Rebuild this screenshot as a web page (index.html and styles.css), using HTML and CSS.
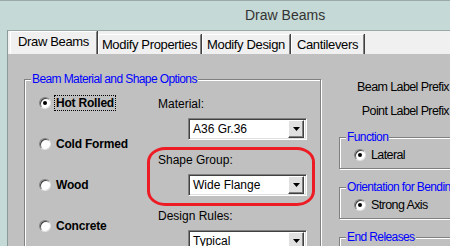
FILE: index.html
```html
<!doctype html>
<html>
    <head>
        <meta charset="utf-8">
        <title>Draw Beams</title>
        <link rel="stylesheet" href="styles.css">
    </head>
    <body>
        <div class="titlebar"><span class="title">Draw Beams</span></div>
        <div class="window">
            <div class="tabs">
                <div class="tab active tab-draw">Draw Beams</div>
                <div class="tab tab-props">Modify Properties</div>
                <div class="tab tab-design">Modify Design</div>
                <div class="tab tab-cant">Cantilevers</div>
            </div>
            <div class="panel">
                <fieldset class="group main">
                    <legend>Beam Material and Shape Options</legend>
                    <div class="main-grid">
                        <div class="types">
                            <div class="opt bold"><span class="radio checked"></span><span class="focus">Hot Rolled</span></div>
                            <div class="opt bold"><span class="radio"></span><span>Cold Formed</span></div>
                            <div class="opt bold"><span class="radio"></span><span>Wood</span></div>
                            <div class="opt bold"><span class="radio"></span><span>Concrete</span></div>
                        </div>
                        <div class="fields">
                            <div class="field-label">Material:</div>
                            <div class="combo"><span class="combo-text">A36 Gr.36</span><span class="combo-btn"><svg width="7" height="4" viewBox="0 0 7 4"><polygon points="0,0 7,0 3.5,4" fill="#000"/></svg></span></div>
                            <div class="field-label">Shape Group:</div>
                            <div class="combo"><span class="combo-text">Wide Flange</span><span class="combo-btn"><svg width="7" height="4" viewBox="0 0 7 4"><polygon points="0,0 7,0 3.5,4" fill="#000"/></svg></span></div>
                            <div class="field-label">Design Rules:</div>
                            <div class="combo"><span class="combo-text">Typical</span><span class="combo-btn"><svg width="7" height="4" viewBox="0 0 7 4"><polygon points="0,0 7,0 3.5,4" fill="#000"/></svg></span></div>
                        </div>
                    </div>
                </fieldset>
                <div class="side">
                    <div class="prefix">Beam Label Prefix</div>
                    <div class="prefix">Point Label Prefix</div>
                    <fieldset class="group side-group">
                        <legend>Function</legend>
                        <div class="opt narrow"><span class="radio checked"></span><span>Lateral</span></div>
                    </fieldset>
                    <fieldset class="group side-group">
                        <legend>Orientation for Bending</legend>
                        <div class="opt narrow"><span class="radio checked"></span><span>Strong Axis</span></div>
                    </fieldset>
                    <fieldset class="group side-group">
                        <legend>End Releases</legend>
                        <div class="opt narrow"><span class="radio"></span><span>Pinned</span></div>
                    </fieldset>
                </div>
            </div>
        </div>
        <div class="highlight"></div>
    </body>
</html>
```

FILE: styles.css
```css
html, body {
    margin: 0;
    height: 246px;
    overflow: hidden;
}
body {
    position: relative;
    background-color: #c5d9d6;
    border-top: 1px solid #9aaaa8;
    box-sizing: border-box;
    font-family: "Liberation Sans", Arial, sans-serif;
    font-size: 12px;
    color: #000;
}
.titlebar {
    height: 29px;
    line-height: 29px;
    padding-left: 245px;
    font-size: 14px;
    color: #333;
}
.window {
    margin-left: 7px;
    width: 600px;
    height: 216px;
    border-left: 1px solid #8a9a98;
    border-top: 1px solid #9aa8a6;
    background-color: #c0c0c0;
}
.tabs {
    display: flex;
    align-items: flex-end;
    height: 23px;
    padding-left: 2px;
    background-color: #f0f0f0;
}
.tab {
    height: 20px;
    line-height: 20px;
    box-sizing: border-box;
    font-size: 13px;
    letter-spacing: -0.35px;
    border-left: 1px solid #fff;
    border-top: 1px solid #fff;
    border-right: 1px solid #808080;
    box-shadow: 1px 0 0 #404040;
    background-color: #f0f0f0;
    text-align: center;
    white-space: nowrap;
}
.tab.active {
    height: 23px;
    line-height: 20px;
    position: relative;
    z-index: 1;
}
.tab + .tab {
    margin-left: 1px;
}
.tab-draw { width: 87px; }
.tab-props { width: 103px; }
.tab-design { width: 88px; }
.tab-cant { width: 73px; }
.panel {
    display: flex;
    gap: 18px;
    padding-left: 16px;
}
.group {
    margin: 0;
    min-width: 0;
    border: 1px solid #808080;
    box-shadow: inset 1px 1px 0 #fff, 1px 1px 0 #fff;
}
.group legend {
    margin-left: -8px;
    padding: 0 1px;
    line-height: 14px;
    font-size: 12px;
    letter-spacing: -0.6px;
    color: #0000ff;
    background-color: #c0c0c0;
    white-space: nowrap;
}
.main {
    width: 297px;
    height: 200px;
    margin-top: 18px;
    padding: 9px 0 0 14px;
    box-sizing: border-box;
}
.main-grid {
    display: grid;
    grid-template-columns: 119px 119px;
}
.types {
    display: flex;
    flex-direction: column;
    gap: 25px;
}
.opt {
    display: flex;
    align-items: center;
    gap: 5px;
    height: 16px;
    white-space: nowrap;
}
.opt.bold {
    font-weight: bold;
    letter-spacing: -0.2px;
}
.opt.narrow {
    font-size: 12.5px;
    letter-spacing: -0.6px;
}
.focus {
    outline: 1px dotted #000;
    padding: 0 1px;
    margin-left: -1px;
    line-height: 14px;
}
.radio {
    position: relative;
    flex: none;
    width: 12px;
    height: 12px;
    box-sizing: border-box;
    border-radius: 50%;
    background-color: #fff;
    border: 1px solid;
    border-color: #808080 #e0e0e0 #e0e0e0 #808080;
    box-shadow: inset 1px 1px 0 #404040;
}
.radio.checked::after {
    content: "";
    position: absolute;
    left: 3px;
    top: 3px;
    width: 4px;
    height: 4px;
    border-radius: 50%;
    background-color: #000;
}
.fields {
    display: flex;
    flex-direction: column;
    padding-top: 1px;
}
.field-label {
    line-height: 16px;
    height: 16px;
}
.combo {
    display: flex;
    width: 119px;
    height: 22px;
    margin: 6px 0 12px 30px;
    box-sizing: border-box;
    background-color: #fff;
    border: 1px solid;
    border-color: #808080 #fff #fff #808080;
    box-shadow: inset 1px 1px 0 #404040, inset -1px -1px 0 #dfdfdf;
    padding: 1px 2px 1px 1px;
}
.combo-text {
    flex: 1;
    line-height: 18px;
    padding-left: 3px;
}
.combo-btn {
    display: flex;
    align-items: center;
    justify-content: center;
    width: 16px;
    background-color: #e0e0e0;
    border: 1px solid;
    border-color: #fff #404040 #404040 #fff;
    box-shadow: inset -1px -1px 0 #808080;
    box-sizing: border-box;
}
.side {
    width: 240px;
    margin-top: 23px;
}
.prefix {
    width: 110px;
    height: 20px;
    line-height: 20px;
    margin-bottom: 4px;
    text-align: right;
    font-size: 12.5px;
    letter-spacing: -0.6px;
    white-space: nowrap;
}
.side-group {
    padding: 3px 0 5px 14px;
    margin-top: 9px;
}
.side-group + .side-group {
    margin-top: 11px;
}
.highlight {
    position: absolute;
    left: 147px;
    top: 146px;
    width: 168px;
    height: 59px;
    box-sizing: border-box;
    border: 3px solid #ed1c24;
    border-radius: 18px / 15px;
}
```
